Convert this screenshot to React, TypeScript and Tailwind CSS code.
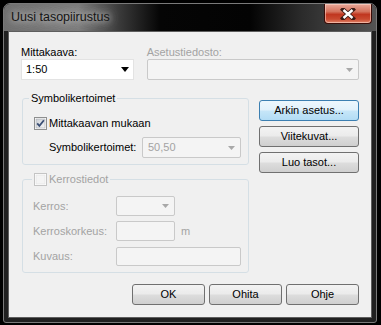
const LABEL_DISABLED = "text-[#a3a3a3]";

function Arrow({ disabled }: { disabled?: boolean }) {
  return disabled ? (
    <svg width="7" height="4" viewBox="0 0 7 4">
      <path d="M0 0 H7 L3.5 4 z" fill="#a8a8a8" />
    </svg>
  ) : (
    <svg width="8" height="5" viewBox="0 0 8 5">
      <path d="M0 0 H8 L4 5 z" fill="#000" />
    </svg>
  );
}

function Combo({
  value,
  disabled,
  className,
}: {
  value?: string;
  disabled?: boolean;
  className: string;
}) {
  return (
    <div
      className={
        disabled
          ? `flex items-center justify-between rounded-[2px] border border-[#c9c9c9] bg-[#f4f4f4] pl-[5px] pr-[5px] text-[#a3a3a3] ${className}`
          : `flex items-center justify-between border border-[#e3e3e3] bg-white pl-[4px] pr-[4px] ${className}`
      }
    >
      <span>{value}</span>
      <Arrow disabled={disabled} />
    </div>
  );
}

function Input({ className }: { className: string }) {
  return <div className={`rounded-[2px] border border-[#c9c9c9] bg-[#f4f4f4] ${className}`} />;
}

function Checkbox({ checked, disabled }: { checked?: boolean; disabled?: boolean }) {
  return (
    <svg width="13" height="13" viewBox="0 0 13 13" className="shrink-0">
      <defs>
        <linearGradient id="cbFill" x1="0" y1="0" x2="1" y2="1">
          <stop offset="0%" stopColor="#cbcfd5" />
          <stop offset="100%" stopColor="#f6f6f6" />
        </linearGradient>
      </defs>
      <rect x="0.5" y="0.5" width="12" height="12" fill="#fff" stroke={disabled ? "#c4c4c4" : "#8e8f8f"} />
      <rect x="2" y="2" width="9" height="9" fill={disabled ? "#f4f4f4" : "url(#cbFill)"} stroke={disabled ? "#e2e2e2" : "#a6a9ad"} strokeWidth="0.6" />
      {checked ? (
        <path d="M3.2 6.3 L5.4 8.8 L9.9 3.2" fill="none" stroke="#3b4f75" strokeWidth="1.8" />
      ) : null}
    </svg>
  );
}

function Button({ label, focused, className }: { label: string; focused?: boolean; className: string }) {
  return (
    <div
      className={
        focused
          ? `flex items-center justify-center rounded-[3px] border border-[#3c7fb1] bg-[linear-gradient(180deg,#edf7fd_0%,#e1f1fb_48%,#c6e6f8_52%,#b2dcf5_100%)] ${className}`
          : `flex items-center justify-center rounded-[3px] border border-[#707070] bg-[linear-gradient(180deg,#f3f3f3_0%,#ebebeb_48%,#dddddd_52%,#cfcfcf_100%)] ${className}`
      }
    >
      {label}
    </div>
  );
}

export default function App() {
  return (
    <div className="h-[325px] w-[381px] bg-black pl-[3px] pt-[3px] font-['Liberation_Sans',Arial,sans-serif] text-[11px] leading-[13px] text-black">
      <div className="flex h-[320px] w-[374px] flex-col overflow-hidden rounded-t-[7px] rounded-b-[3px] border border-[#7a7a7a] bg-[#202020]">
        {/* title bar */}
        <div className="relative flex h-[27px] shrink-0 items-center bg-[linear-gradient(90deg,#6f6f6f_0%,#7c7c7c_20%,#3a3a3a_31%,#050505_42%,#030303_66%,#2b2b2b_80%,#545454_100%)] pl-[7px]">
          <span className="pb-[1px] text-[12.5px] text-[#141414] [text-shadow:0_0_6px_#c8c8c8,0_0_10px_#b0b0b0,0_0_14px_#9a9a9a]">
            Uusi tasopiirustus
          </span>
          <div className="absolute right-[4px] top-0 flex h-[20px] w-[48px] items-center justify-center rounded-b-[4px] border border-t-0 border-[#3b0d08] bg-[linear-gradient(180deg,#e9a99a_0%,#d4735d_40%,#c0361f_55%,#c94a30_80%,#e0856a_100%)] shadow-[inset_0_0_0_1px_rgba(255,220,210,0.55)]">
            <svg width="16" height="12" viewBox="0 0 16 12">
              <path d="M3 1.5 L13 10.5 M13 1.5 L3 10.5" stroke="#3a1a14" strokeWidth="4.2" strokeLinecap="square" />
              <path d="M3.5 2 L12.5 10 M12.5 2 L3.5 10" stroke="#fff" strokeWidth="2.4" />
            </svg>
          </div>
        </div>

        {/* frame + client */}
        <div className="flex flex-1 flex-col px-[4px] pb-[4px]">
          <div className="flex flex-1 flex-col border border-[#5e5e5e] bg-[#f0f0f0] px-[12px] pt-[14px]">
            {/* top row */}
            <div className="flex">
              <div className="flex w-[113px] flex-col">
                <span>Mittakaava:</span>
                <Combo value="1:50" className="h-[21px]" />
              </div>
              <div className="ml-[13px] flex w-[213px] flex-col">
                <span className={LABEL_DISABLED}>Asetustiedosto:</span>
                <Combo disabled className="h-[21px]" />
              </div>
            </div>

            {/* middle */}
            <div className="mt-[12px] flex items-start">
              <div className="ml-[1px] flex w-[227px] flex-col">
                <fieldset className="rounded-[3px] border border-[#d5dfe5] pb-[6px]">
                  <legend className="ml-[6px] px-[2px]">Symbolikertoimet</legend>
                  <div className="mt-[12px] flex h-[13px] items-center gap-[2px] pl-[11px]">
                    <Checkbox checked />
                    <span>Mittakaavan mukaan</span>
                  </div>
                  <div className="mt-[7px] flex h-[21px] items-center pl-[26px]">
                    <span className="w-[93px]">Symbolikertoimet:</span>
                    <Combo disabled value="50,50" className="h-[21px] w-[99px]" />
                  </div>
                </fieldset>

                <fieldset className="mt-[8px] rounded-[3px] border border-[#d5dfe5] pb-[6px]">
                  <legend className="ml-[9px] flex items-center gap-[2px] px-[2px]">
                    <Checkbox disabled />
                    <span className={LABEL_DISABLED}>Kerrostiedot</span>
                  </legend>
                  <div className="mt-[10px] flex flex-col gap-[5px] pl-[10px]">
                    <div className="flex h-[20px] items-center">
                      <span className={`w-[83px] ${LABEL_DISABLED}`}>Kerros:</span>
                      <Combo disabled className="h-[20px] w-[59px]" />
                    </div>
                    <div className="flex h-[20px] items-center">
                      <span className={`w-[83px] ${LABEL_DISABLED}`}>Kerroskorkeus:</span>
                      <Input className="h-[20px] w-[59px]" />
                      <span className={`ml-[6px] ${LABEL_DISABLED}`}>m</span>
                    </div>
                    <div className="flex h-[20px] items-center">
                      <span className={`w-[83px] ${LABEL_DISABLED}`}>Kuvaus:</span>
                      <Input className="h-[19px] w-[125px]" />
                    </div>
                  </div>
                </fieldset>
              </div>

              <div className="ml-[10px] mt-[8px] flex w-[100px] flex-col gap-[5px]">
                <Button label="Arkin asetus..." focused className="h-[21px]" />
                <Button label="Viitekuvat..." className="h-[21px]" />
                <Button label="Luo tasot..." className="h-[21px]" />
              </div>
            </div>

            {/* bottom buttons */}
            <div className="mt-[11px] flex justify-end gap-[4px]">
              <Button label="OK" className="h-[21px] w-[73px]" />
              <Button label="Ohita" className="h-[21px] w-[73px]" />
              <Button label="Ohje" className="h-[21px] w-[73px]" />
            </div>
          </div>
        </div>
      </div>
    </div>
  );
}
